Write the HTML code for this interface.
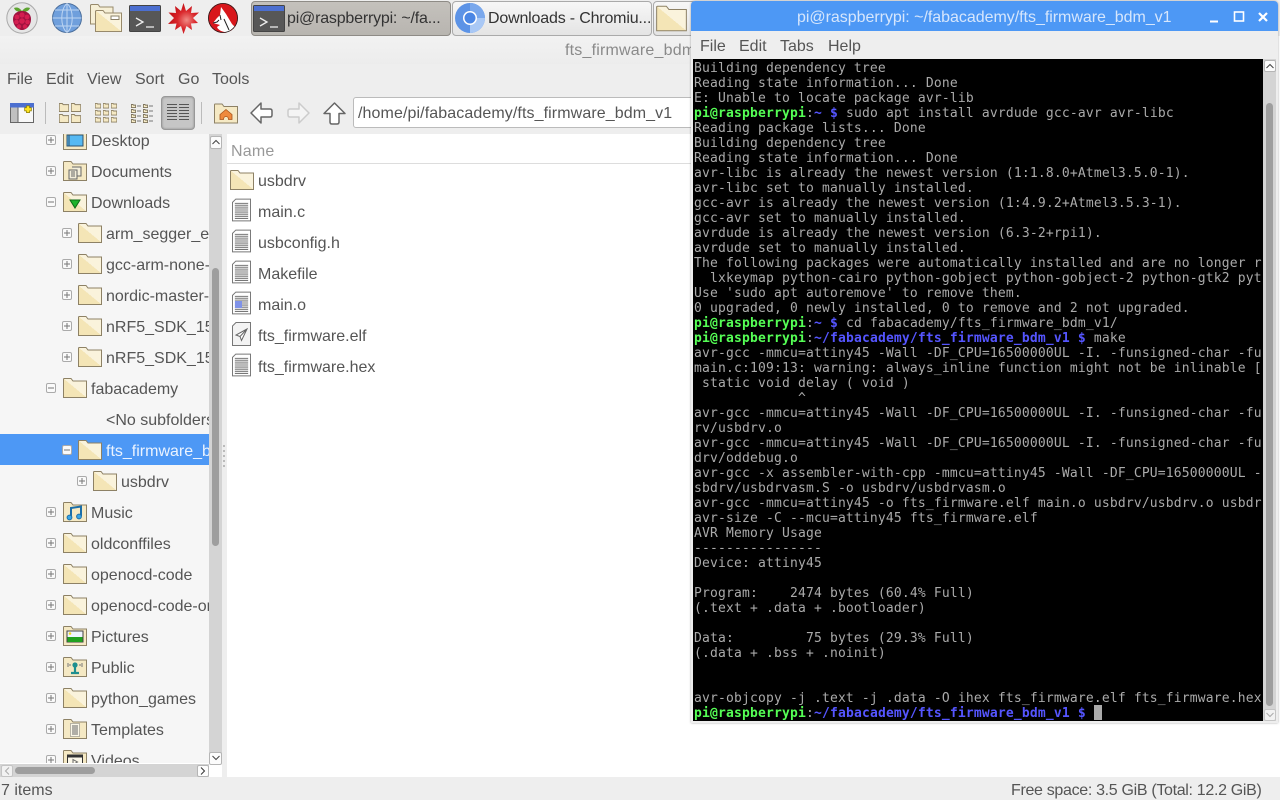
<!DOCTYPE html>
<html><head><meta charset="utf-8"><title>fts_firmware_bdm_v1</title>
<style>
html,body{margin:0;padding:0;width:1280px;height:800px;overflow:hidden;background:#fff}
body{font-family:"Liberation Sans",sans-serif;font-size:16px;color:#555;position:relative}
.a{position:absolute;white-space:pre;line-height:20px;margin-top:2px}
.bx{position:absolute;box-sizing:border-box}
svg{position:absolute;overflow:visible}
#tree svg.e{width:10px;height:10px}
symbol path,symbol rect{vector-effect:non-scaling-stroke}
#term{position:absolute;left:694px;top:61px;width:569px;height:660px;overflow:hidden;margin:0;font:13px/15px "DejaVu Sans Mono",monospace;letter-spacing:.17px;color:#aaa;white-space:pre}
#term b{font-weight:bold}
.g{color:#55ff55;font-weight:bold}.u{color:#5555ff;font-weight:bold}
</style></head><body>
<svg width="0" height="0" style="position:absolute">
<defs>
<linearGradient id="fg" x1="0" y1="1" x2="1" y2="0"><stop offset=".5" stop-color="#f4e5b6"/><stop offset=".5" stop-color="#faf3dc"/></linearGradient>
<symbol id="f" viewBox="0 0 24 20"><path d="M.5 19.5V1.2Q.5.5 1.2.5H8L10 3H23.5V19.5Z" fill="url(#fg)" stroke="#8d8165"/></symbol>
<symbol id="fp" viewBox="0 0 24 20"><path d="M.5 19.5V1.2Q.5.5 1.2.5H8L10 3H23.5V19.5Z" fill="#f5e9c4" stroke="#8d8165"/></symbol>
<symbol id="p" viewBox="0 0 10 10"><rect x=".5" y=".5" width="9" height="9" rx="1.5" fill="#fafafa" stroke="#aaa"/><path d="M2 5H8M5 2V8" stroke="#777"/></symbol>
<symbol id="m" viewBox="0 0 10 10"><rect x=".5" y=".5" width="9" height="9" rx="1.5" fill="#fafafa" stroke="#aaa"/><path d="M2 5H8" stroke="#777"/></symbol>
<symbol id="doc" viewBox="0 0 20 24"><path d="M.5 4L4 .5H19.5V23.5H.5Z" fill="#fff" stroke="#777"/><path d="M3 5H17M3 7H17M3 9H17M3 11H17M3 13H17M3 15H17M3 17H17M3 19H17M3 21H17" stroke="#777" stroke-width="1"/></symbol>
<symbol id="mini" viewBox="0 0 8 6"><path d="M.5 5.5V.5H3L4 1.5H7.5V5.5Z" fill="#f7ecc7" stroke="#7d735c"/></symbol>
</defs></svg>

<!-- taskbar -->
<div class="bx" style="left:0;top:0;width:1280px;height:36px;background:#eee"></div>
<svg style="left:6px;top:2px" width="32" height="32" viewBox="0 0 32 32"><circle cx="16" cy="16" r="15.2" fill="#e6e6e6" stroke="#aaa"/><path d="M16 9C13 5 10 5 8 6 9 9 12 10 16 10 20 10 23 9 24 6 22 5 19 5 16 9Z" fill="#5da431"/><path d="M16 9C21 9 25 12 25 17 25 24 20 28 16 28 12 28 7 24 7 17 7 12 11 9 16 9Z" fill="#a0123f"/><g fill="#d41e50"><circle cx="16" cy="13" r="2.6"/><circle cx="11" cy="15" r="2.4"/><circle cx="21" cy="15" r="2.4"/><circle cx="16" cy="19" r="2.8"/><circle cx="10.500" cy="20" r="2.3"/><circle cx="21.500" cy="20" r="2.3"/><circle cx="13" cy="24.500" r="2.200"/><circle cx="19" cy="24.500" r="2.200"/></g></svg>
<svg style="left:52px;top:3px" width="30" height="30" viewBox="0 0 30 30"><circle cx="15" cy="15" r="14.500" fill="#6f9fdc" stroke="#4c6f9c"/><path d="M15 .5V29.500M.5 15H29.500M3 7H27M3 23H27M15 .5C8 6 8 24 15 29.500M15 .5C22 6 22 24 15 29.500" fill="none" stroke="#bcd4f2"/></svg>
<svg style="left:90px;top:4px" width="32" height="28" viewBox="0 0 32 28"><path d="M.5 20V1L1.500.5H8L10 3H23V20Z" fill="#f6efd6" stroke="#97896b"/><path d="M5.500 27.500V7L6.500 6.500H13L15 9H31.500V27.500Z" fill="url(#fg)" stroke="#97896b"/><rect x="21" y="12" width="8" height="3.500" fill="#fff" stroke="#8a8067"/></svg>
<svg style="left:129px;top:5px" width="32" height="27" viewBox="0 0 32 27"><rect x=".5" y=".5" width="31" height="26" rx="1" fill="#575757" stroke="#444"/><rect x="1" y="1" width="30" height="5" fill="#4c6fd0"/><path d="M7 13L14 17 7 21M17 22H25" fill="none" stroke="#eee" stroke-width="1.300"/></svg>
<svg style="left:168px;top:3px" width="31" height="31" viewBox="0 0 31 31"><defs><radialGradient id="wr" cx=".6" cy=".55" r=".5"><stop offset="0" stop-color="#f08a84"/><stop offset=".6" stop-color="#d9262b"/><stop offset="1" stop-color="#c8141a"/></radialGradient></defs><path d="M15.500 0L18 8 24 3 23 10 31 9.500 25 15 30 20 23 20.500 24 27 18.500 23 15.500 31 13 23 7 27 8.500 20.500 0 21 6 15 .5 9.500 8 10 7 3 13 8Z" fill="url(#wr)"/></svg>
<svg style="left:208px;top:3px" width="30" height="30" viewBox="0 0 30 30"><circle cx="15" cy="15" r="15" fill="#d8161b"/><path d="M13 4L18 11 24 21 27 24 20 29.500C14 29 10 27 9 24L12 22 5 20 9 15 12 12Z" fill="#fff"/><circle cx="15" cy="15" r="14.500" fill="none" stroke="#222" stroke-width=".8"/><path d="M5 20L9 19 11 17M12 12L13 17M16 16L21 27" fill="none" stroke="#222" stroke-width="1"/></svg>

<div class="bx" style="left:251px;top:1px;width:200px;height:35px;background:linear-gradient(#c4c1bc,#b8b5b0);border:1px solid #8e8b86;border-radius:4px"></div>
<svg style="left:253px;top:5px" width="32" height="27" viewBox="0 0 32 27"><rect x=".5" y=".5" width="31" height="26" rx="1" fill="#575757" stroke="#444"/><rect x="1" y="1" width="30" height="5" fill="#4c6fd0"/><path d="M7 13L14 17 7 21M17 22H25" fill="none" stroke="#eee" stroke-width="1.300"/></svg>
<div class="a" style="left:287px;top:8px;margin-top:1px;color:#333;letter-spacing:-.2px">pi@raspberrypi: ~/fa...</div>
<div class="bx" style="left:452px;top:1px;width:200px;height:35px;background:linear-gradient(#f7f7f7,#e4e4e4);border:1px solid #aaa;border-radius:4px"></div>
<svg style="left:455px;top:3px" width="30" height="30" viewBox="0 0 30 30"><circle cx="15" cy="15" r="15" fill="#5c93e6"/><path d="M15 15L30 15A15 15 0 0 1 15 30Z" fill="#a9c8f5"/><path d="M15 0A15 15 0 0 1 30 15H15Z" fill="#7aa8ec"/><circle cx="15" cy="15" r="7" fill="#fff"/><circle cx="15" cy="15" r="5.500" fill="#4a86e4"/></svg>
<div class="a" style="left:488px;top:8px;margin-top:1px;color:#333;letter-spacing:-.18px">Downloads - Chromiu...</div>
<div class="bx" style="left:653px;top:1px;width:60px;height:35px;background:linear-gradient(#f7f7f7,#e4e4e4);border:1px solid #aaa;border-radius:4px"></div>
<svg style="left:656px;top:5px" width="31" height="27"><use href="#f" width="31" height="27"/></svg>

<!-- file manager chrome -->
<div class="bx" style="left:0;top:36px;width:700px;height:30px;background:linear-gradient(#f2f2f2,#ececec)"></div>
<div class="bx" style="left:0;top:64px;width:700px;height:70px;background:#eee"></div>
<div class="a" style="left:565px;top:41px;margin-top:0;color:#8a8a8a;letter-spacing:.2px">fts_firmware_bdm_v1</div>
<div class="a" style="left:7px;top:68px">File</div>
<div class="a" style="left:46px;top:68px">Edit</div>
<div class="a" style="left:87px;top:68px">View</div>
<div class="a" style="left:135px;top:68px">Sort</div>
<div class="a" style="left:178px;top:68px">Go</div>
<div class="a" style="left:212px;top:68px">Tools</div>

<!-- toolbar -->
<svg style="left:10px;top:103px" width="24" height="20" viewBox="0 0 24 20"><rect x=".5" y=".5" width="23" height="19" fill="#f8f8f8" stroke="#666"/><rect x="1" y="4" width="7" height="15" fill="#c0c0c0"/><path d="M8 4V19" stroke="#666"/><rect x="0" y="0" width="24" height="4.500" fill="#4c6fd0"/><path d="M18 2.500V10M14.300 6.300H21.700" stroke="#8a7a00" stroke-width="3.800"/><path d="M18 3.300V9.300M15 6.300H21" stroke="#ffe520" stroke-width="2.400"/></svg>
<div class="bx" style="left:45px;top:102px;width:1px;height:22px;background:#bbb"></div>
<svg style="left:59px;top:103px" width="22" height="20" viewBox="0 0 22 20"><use href="#fp" x="0" y="0" width="10" height="9"/><use href="#fp" x="12" y="0" width="10" height="9"/><use href="#fp" x="0" y="11" width="10" height="9"/><use href="#fp" x="12" y="11" width="10" height="9"/></svg>
<svg style="left:95px;top:103px" width="22" height="20" viewBox="0 0 22 20"><use href="#fp" x="0" y="0" width="6" height="5.500"/><use href="#fp" x="8" y="0" width="6" height="5.500"/><use href="#fp" x="16" y="0" width="6" height="5.500"/><use href="#fp" x="0" y="7" width="6" height="5.500"/><use href="#fp" x="8" y="7" width="6" height="5.500"/><use href="#fp" x="16" y="7" width="6" height="5.500"/><use href="#fp" x="0" y="14" width="6" height="5.500"/><use href="#fp" x="8" y="14" width="6" height="5.500"/><use href="#fp" x="16" y="14" width="6" height="5.500"/></svg>
<svg style="left:131px;top:104px" width="23" height="19" viewBox="0 0 23 19"><g id="cl"><use href="#mini" width="5" height="4"/><use href="#mini" y="5" width="5" height="4"/><use href="#mini" y="10" width="5" height="4"/><use href="#mini" y="15" width="5" height="4"/><path d="M6 2H10M6 7H10M6 12H10M6 17H10" stroke="#777"/></g><g transform="translate(12 0)"><use href="#mini" width="5" height="4"/><use href="#mini" y="5" width="5" height="4"/><use href="#mini" y="10" width="5" height="4"/><use href="#mini" y="15" width="5" height="4"/><path d="M6 2H10M6 7H10M6 12H10M6 17H10" stroke="#777"/></g></svg>
<div class="bx" style="left:161px;top:96px;width:34px;height:34px;background:#c6c6c6;border:1px solid #989898;border-radius:4px;box-shadow:inset 0 0 2px #888"></div>
<svg style="left:167px;top:103px" width="22" height="20" viewBox="0 0 22 20"><path d="M0 1.500H10M12 1.500H22M0 4.500H10M12 4.500H22M0 7.500H10M12 7.500H22M0 10.500H10M12 10.500H22M0 13.500H10M12 13.500H22M0 16.500H10M12 16.500H22" stroke="#555" stroke-width="1"/></svg>
<div class="bx" style="left:201px;top:102px;width:1px;height:22px;background:#bbb"></div>
<svg style="left:214px;top:103px" width="24" height="21" viewBox="0 0 24 20"><use href="#fp" width="24" height="20"/><path d="M12 6L18 11V16H14.500C14.500 12 9.500 12 9.500 16H6V11Z" fill="#ef8a3d" stroke="#a8541c" stroke-width=".8"/></svg>
<svg style="left:250px;top:102px" width="23" height="22" viewBox="0 0 23 22"><path d="M11 1L1 11 11 21V15H20Q22 15 22 13V9Q22 7 20 7H11Z" fill="#fff" stroke="#666" stroke-width="1.500" stroke-linejoin="round"/></svg>
<svg style="left:287px;top:102px" width="23" height="22" viewBox="0 0 23 22"><path d="M12 1L22 11 12 21V15H3Q1 15 1 13V9Q1 7 3 7H12Z" fill="#f4f4f4" stroke="#ccc" stroke-width="1.500" stroke-linejoin="round"/></svg>
<svg style="left:323px;top:102px" width="23" height="23" viewBox="0 0 23 23"><path d="M11.500 1L1 11.500H7V20Q7 22 9 22H14Q16 22 16 20V11.500H22Z" fill="#fff" stroke="#666" stroke-width="1.500" stroke-linejoin="round"/></svg>
<div class="bx" style="left:353px;top:97px;width:360px;height:31px;background:#fff;border:1px solid #bbb;border-radius:3px"></div>
<div class="a" style="left:358px;top:103px;margin-top:1px;letter-spacing:.1px">/home/pi/fabacademy/fts_firmware_bdm_v1</div>

<!-- side pane -->
<div class="bx" id="tree" style="left:0;top:134px;width:209px;height:629px;background:#f6f6f6;overflow:hidden">
<svg class="e" style="left:46px;top:1px"><use href="#p"/></svg>
<svg style="left:63px;top:-4px" width="24" height="20"><use href="#fp" width="24" height="20"/><rect x="4" y="5" width="16" height="11" fill="#56b9f2" stroke="#31536e"/><path d="M6 5V16" stroke="#31536e"/></svg><div class="a" style="left:91px;top:-4px">Desktop</div>
<svg class="e" style="left:46px;top:32px"><use href="#p"/></svg>
<svg style="left:63px;top:27px" width="24" height="20"><use href="#fp" width="24" height="20"/><path d="M6 9H14V18H6ZM9 6H18V15H14" fill="#f3eeda" stroke="#666"/><path d="M8 11H12M8 13H12M8 15H12" stroke="#666"/></svg><div class="a" style="left:91px;top:27px">Documents</div>
<svg class="e" style="left:46px;top:63px"><use href="#m"/></svg>
<svg style="left:63px;top:58px" width="24" height="20"><use href="#f" width="24" height="20"/><path d="M7 8H17L12 16Z" fill="#1fb32a" stroke="#0e6b16"/></svg><div class="a" style="left:91px;top:58px">Downloads</div>
<svg class="e" style="left:62px;top:94px"><use href="#p"/></svg><svg style="left:78px;top:89px" width="24" height="20"><use href="#f" width="24" height="20"/></svg><div class="a" style="left:106px;top:89px">arm_segger_en</div>
<svg class="e" style="left:62px;top:125px"><use href="#p"/></svg><svg style="left:78px;top:120px" width="24" height="20"><use href="#f" width="24" height="20"/></svg><div class="a" style="left:106px;top:120px">gcc-arm-none-eabi</div>
<svg class="e" style="left:62px;top:156px"><use href="#p"/></svg><svg style="left:78px;top:151px" width="24" height="20"><use href="#f" width="24" height="20"/></svg><div class="a" style="left:106px;top:151px">nordic-master-</div>
<svg class="e" style="left:62px;top:187px"><use href="#p"/></svg><svg style="left:78px;top:182px" width="24" height="20"><use href="#f" width="24" height="20"/></svg><div class="a" style="left:106px;top:182px">nRF5_SDK_15.</div>
<svg class="e" style="left:62px;top:218px"><use href="#p"/></svg><svg style="left:78px;top:213px" width="24" height="20"><use href="#f" width="24" height="20"/></svg><div class="a" style="left:106px;top:213px">nRF5_SDK_15.</div>
<svg class="e" style="left:46px;top:249px"><use href="#m"/></svg><svg style="left:63px;top:244px" width="24" height="20"><use href="#f" width="24" height="20"/></svg><div class="a" style="left:91px;top:244px">fabacademy</div>
<div class="a" style="left:106px;top:275px">&lt;No subfolders&gt;</div>
<div class="bx" style="left:0;top:300px;width:209px;height:31px;background:#4d98f5"></div>
<svg class="e" style="left:62px;top:311px"><use href="#m"/></svg><svg style="left:78px;top:306px" width="24" height="20"><use href="#f" width="24" height="20"/></svg><div class="a" style="left:106px;top:306px;color:#eaf3ff">fts_firmware_bdm_v1</div>
<svg class="e" style="left:77px;top:342px"><use href="#p"/></svg><svg style="left:93px;top:337px" width="24" height="20"><use href="#f" width="24" height="20"/></svg><div class="a" style="left:121px;top:337px">usbdrv</div>
<svg class="e" style="left:46px;top:373px"><use href="#p"/></svg><svg style="left:63px;top:368px" width="24" height="20"><use href="#fp" width="24" height="20"/><path d="M8 15V6L18 4.500V14" fill="none" stroke="#1c6ea8" stroke-width="2"/><circle cx="6.500" cy="15.500" r="2.400" fill="#38a6e6" stroke="#1c6ea8"/><circle cx="16" cy="14.500" r="2.400" fill="#38a6e6" stroke="#1c6ea8"/></svg><div class="a" style="left:91px;top:368px">Music</div>
<svg class="e" style="left:46px;top:404px"><use href="#p"/></svg><svg style="left:63px;top:399px" width="24" height="20"><use href="#f" width="24" height="20"/></svg><div class="a" style="left:91px;top:399px">oldconffiles</div>
<svg class="e" style="left:46px;top:435px"><use href="#p"/></svg><svg style="left:63px;top:430px" width="24" height="20"><use href="#f" width="24" height="20"/></svg><div class="a" style="left:91px;top:430px">openocd-code</div>
<svg class="e" style="left:46px;top:466px"><use href="#p"/></svg><svg style="left:63px;top:461px" width="24" height="20"><use href="#f" width="24" height="20"/></svg><div class="a" style="left:91px;top:461px">openocd-code-or</div>
<svg class="e" style="left:46px;top:497px"><use href="#p"/></svg><svg style="left:63px;top:492px" width="24" height="20"><use href="#fp" width="24" height="20"/><rect x="4" y="5" width="16" height="11" fill="#eef4ff" stroke="#444"/><rect x="4.500" y="11" width="15" height="5" fill="#20a020"/><circle cx="7" cy="7.500" r="1.300" fill="#f1d820"/></svg><div class="a" style="left:91px;top:492px">Pictures</div>
<svg class="e" style="left:46px;top:528px"><use href="#p"/></svg><svg style="left:63px;top:523px" width="24" height="20"><use href="#fp" width="24" height="20"/><circle cx="12" cy="8" r="2.600" fill="#1f8f8f"/><path d="M12 9V15M8 16H16" stroke="#1f8f8f" stroke-width="2.200"/><path d="M5 6V10M19 6V10M7 7V9M17 7V9" stroke="#777"/></svg><div class="a" style="left:91px;top:523px">Public</div>
<svg class="e" style="left:46px;top:559px"><use href="#p"/></svg><svg style="left:63px;top:554px" width="24" height="20"><use href="#f" width="24" height="20"/></svg><div class="a" style="left:91px;top:554px">python_games</div>
<svg class="e" style="left:46px;top:590px"><use href="#p"/></svg><svg style="left:63px;top:585px" width="24" height="20"><use href="#fp" width="24" height="20"/><rect x="7.500" y="4.500" width="9" height="13" fill="#fbf7e8" stroke="#777" stroke-dasharray="1 1"/><path d="M9 7H15M9 9H15M9 11H15M9 13H15M9 15H15" stroke="#666"/></svg><div class="a" style="left:91px;top:585px">Templates</div>
<svg class="e" style="left:46px;top:621px"><use href="#p"/></svg><svg style="left:63px;top:616px" width="24" height="20"><use href="#fp" width="24" height="20"/><rect x="4.500" y="5" width="15" height="12" fill="#fbf7e8" stroke="#333"/><path d="M4.500 5H19.500V7.500H4.500Z" fill="#333"/><path d="M10 9.500L14.500 12 10 14.500Z" fill="none" stroke="#666"/></svg><div class="a" style="left:91px;top:616px">Videos</div>
</div>

<!-- tree scrollbars -->
<div class="bx" style="left:209px;top:134px;width:13px;height:629px;background:#d4d4d4"></div>
<div class="bx" style="left:210px;top:136px;width:12px;height:13px;background:#fcfcfc;border:1px solid #b5b5b5;border-radius:2px"></div>
<svg style="left:212px;top:139px" width="8" height="6"><path d="M.5 5L4 1.500 7.500 5" fill="none" stroke="#444"/></svg>
<div class="bx" style="left:212px;top:268px;width:7px;height:278px;background:#9e9e9e;border-radius:4px"></div>
<div class="bx" style="left:209px;top:752px;width:13px;height:13px;background:#fcfcfc;border:1px solid #b5b5b5;border-radius:2px"></div>
<svg style="left:212px;top:755px" width="8" height="6"><path d="M.5 1L4 4.500 7.500 1" fill="none" stroke="#444"/></svg>
<div class="bx" style="left:0;top:764px;width:209px;height:13px;background:#d4d4d4"></div>
<div class="bx" style="left:1px;top:765px;width:12px;height:12px;background:#f2f2f2;border:1px solid #c4c4c4;border-radius:2px"></div>
<svg style="left:4px;top:767px" width="6" height="8"><path d="M5 .5L1.500 4 5 7.500" fill="none" stroke="#aaa"/></svg>
<div class="bx" style="left:197px;top:765px;width:12px;height:12px;background:#fcfcfc;border:1px solid #b5b5b5;border-radius:2px"></div>
<svg style="left:200px;top:767px" width="6" height="8"><path d="M1 .5L4.500 4 1 7.500" fill="none" stroke="#333"/></svg>
<div class="bx" style="left:15px;top:767px;width:80px;height:7px;background:#9e9e9e;border-radius:4px"></div>
<div class="bx" style="left:222px;top:134px;width:5px;height:643px;background:#eee"></div>
<div class="bx" style="left:223px;top:445px;width:2px;height:23px;background:repeating-linear-gradient(#bbb 0 2px,transparent 2px 5px)"></div>

<!-- file list -->
<div class="bx" style="left:227px;top:134px;width:470px;height:643px;background:#fff"></div>
<div class="bx" style="left:227px;top:163px;width:470px;height:1px;background:#ddd"></div>
<div class="a" style="left:231px;top:140px;color:#999;letter-spacing:.2px">Name</div>
<svg style="left:230px;top:170px" width="24" height="20"><use href="#f" width="24" height="20"/></svg><div class="a" style="left:258px;top:170px">usbdrv</div>
<svg style="left:232px;top:198px" width="19" height="24"><use href="#doc" width="19" height="24"/></svg><div class="a" style="left:258px;top:201px">main.c</div>
<svg style="left:232px;top:229px" width="19" height="24"><use href="#doc" width="19" height="24"/></svg><div class="a" style="left:258px;top:232px">usbconfig.h</div>
<svg style="left:232px;top:260px" width="19" height="24"><use href="#doc" width="19" height="24"/></svg><div class="a" style="left:258px;top:263px">Makefile</div>
<svg style="left:232px;top:291px" width="19" height="24"><use href="#doc" width="19" height="24"/><rect x="3" y="10" width="7" height="7" fill="#7f92e8"/></svg><div class="a" style="left:258px;top:294px">main.o</div>
<svg style="left:232px;top:322px" width="19" height="24" viewBox="0 0 19 24"><path d="M.5 4L4 .5H18.500V23.500H.5Z" fill="#f3f3f3" stroke="#777"/><path d="M15 7L4 13 8 14.500 9.500 18.500ZM8 14.500L15 7" fill="#fff" stroke="#666"/></svg><div class="a" style="left:258px;top:325px">fts_firmware.elf</div>
<svg style="left:232px;top:353px" width="19" height="24"><use href="#doc" width="19" height="24"/></svg><div class="a" style="left:258px;top:356px">fts_firmware.hex</div>

<!-- status -->
<div class="bx" style="left:0;top:777px;width:1280px;height:23px;background:#eee"></div>
<div class="a" style="left:1px;top:779px">7 items</div>
<div class="a" style="left:1011px;top:779px;letter-spacing:-.32px">Free space: 3.5 GiB (Total: 12.2 GiB)</div>

<!-- terminal window -->
<div class="bx" style="left:691px;top:1px;width:587px;height:722px;background:#eee;border-radius:4px 4px 0 0;box-shadow:0 0 2px rgba(0,0,0,.35)"></div>
<div class="bx" style="left:691px;top:1px;width:587px;height:30px;background:#4d98f5;border-radius:4px 4px 0 0"></div>
<div class="a" style="left:797px;top:7px;margin-top:1px;color:#d6e6fc;letter-spacing:-.03px">pi@raspberrypi: ~/fabacademy/fts_firmware_bdm_v1</div>
<svg style="left:1205px;top:10px" width="70" height="14"><path d="M5 11.500H13" stroke="#fff" stroke-width="2"/><rect x="29.500" y="2" width="9" height="9" fill="none" stroke="#fff" stroke-width="1.600"/><path d="M54 3L62 11M62 3L54 11" stroke="#fff" stroke-width="2.200"/></svg>
<div class="a" style="left:700px;top:35px">File</div>
<div class="a" style="left:739px;top:35px">Edit</div>
<div class="a" style="left:780px;top:35px">Tabs</div>
<div class="a" style="left:828px;top:35px">Help</div>
<div class="bx" style="left:693px;top:59px;width:570px;height:662px;background:#000"></div>
<pre id="term">Building dependency tree
Reading state information... Done
E: Unable to locate package avr-lib
<span class="g">pi@raspberrypi</span>:<span class="u">~ $</span> sudo apt install avrdude gcc-avr avr-libc
Reading package lists... Done
Building dependency tree
Reading state information... Done
avr-libc is already the newest version (1:1.8.0+Atmel3.5.0-1).
avr-libc set to manually installed.
gcc-avr is already the newest version (1:4.9.2+Atmel3.5.3-1).
gcc-avr set to manually installed.
avrdude is already the newest version (6.3-2+rpi1).
avrdude set to manually installed.
The following packages were automatically installed and are no longer r
  lxkeymap python-cairo python-gobject python-gobject-2 python-gtk2 pyt
Use 'sudo apt autoremove' to remove them.
0 upgraded, 0 newly installed, 0 to remove and 2 not upgraded.
<span class="g">pi@raspberrypi</span>:<span class="u">~ $</span> cd fabacademy/fts_firmware_bdm_v1/
<span class="g">pi@raspberrypi</span>:<span class="u">~/fabacademy/fts_firmware_bdm_v1 $</span> make
avr-gcc -mmcu=attiny45 -Wall -DF_CPU=16500000UL -I. -funsigned-char -fu
main.c:109:13: warning: always_inline function might not be inlinable [
 static void delay ( void )
             ^
avr-gcc -mmcu=attiny45 -Wall -DF_CPU=16500000UL -I. -funsigned-char -fu
rv/usbdrv.o
avr-gcc -mmcu=attiny45 -Wall -DF_CPU=16500000UL -I. -funsigned-char -fu
drv/oddebug.o
avr-gcc -x assembler-with-cpp -mmcu=attiny45 -Wall -DF_CPU=16500000UL -
sbdrv/usbdrvasm.S -o usbdrv/usbdrvasm.o
avr-gcc -mmcu=attiny45 -o fts_firmware.elf main.o usbdrv/usbdrv.o usbdr
avr-size -C --mcu=attiny45 fts_firmware.elf
AVR Memory Usage
----------------
Device: attiny45

Program:    2474 bytes (60.4% Full)
(.text + .data + .bootloader)

Data:         75 bytes (29.3% Full)
(.data + .bss + .noinit)


avr-objcopy -j .text -j .data -O ihex fts_firmware.elf fts_firmware.hex
<span class="g">pi@raspberrypi</span>:<span class="u">~/fabacademy/fts_firmware_bdm_v1 $</span> </pre>
<div class="bx" style="left:1094px;top:705px;width:8px;height:15px;background:#aaa"></div>
<div class="bx" style="left:1263px;top:59px;width:13px;height:662px;background:#d4d4d4"></div>
<div class="bx" style="left:1264px;top:60px;width:12px;height:12px;background:#fcfcfc;border:1px solid #b5b5b5;border-radius:2px"></div>
<svg style="left:1266px;top:63px" width="8" height="6"><path d="M.5 5L4 1.500 7.500 5" fill="none" stroke="#444"/></svg>
<div class="bx" style="left:1266px;top:103px;width:7px;height:603px;background:#9e9e9e;border-radius:4px"></div>
<div class="bx" style="left:1264px;top:709px;width:12px;height:12px;background:#f2f2f2;border:1px solid #c4c4c4;border-radius:2px"></div>
<svg style="left:1266px;top:712px" width="8" height="6"><path d="M.5 1L4 4.500 7.500 1" fill="none" stroke="#aaa"/></svg>
</body></html>
